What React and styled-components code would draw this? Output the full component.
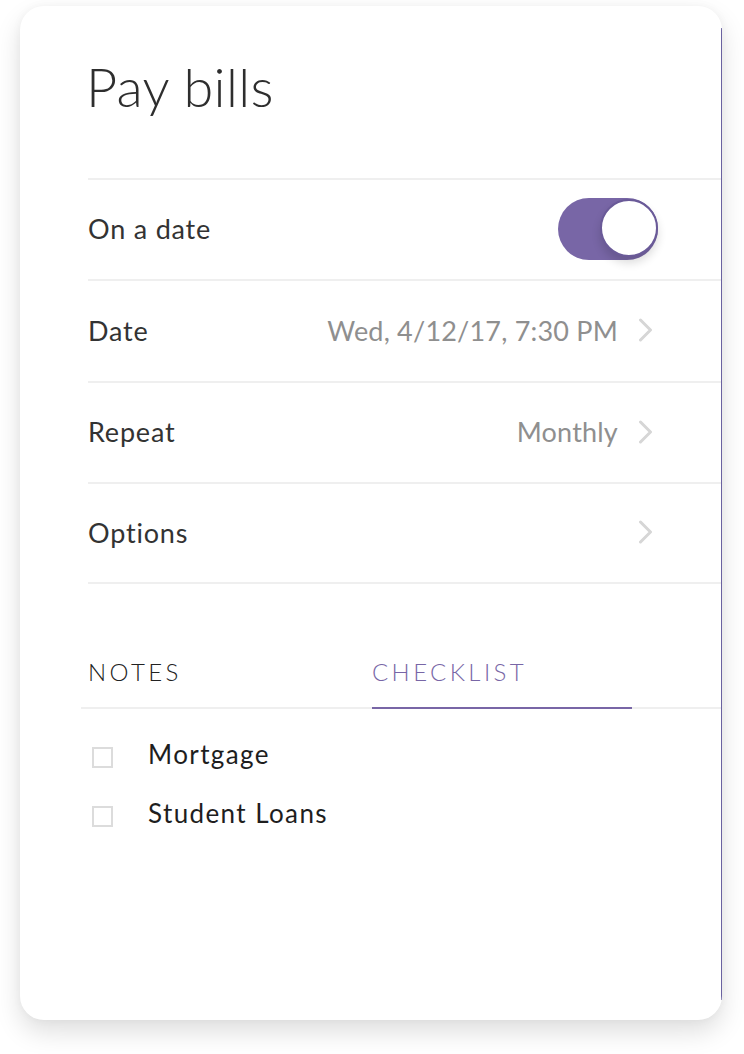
import React from "react";
import styled, { createGlobalStyle } from "styled-components";

const Global = createGlobalStyle`
  html, body { margin: 0; padding: 0; background: #ffffff; }
  body { font-family: Lato, "Open Sans", "Liberation Sans", sans-serif; -webkit-font-smoothing: antialiased; }
  * { box-sizing: border-box; }
`;

const PURPLE = "#7866a6";

const Page = styled.div`
  padding: 6px 22px 34px 20px;
`;

const Card = styled.div`
  position: relative;
  width: 702px;
  height: 1014px;
  background: #fff;
  border-radius: 24px;
  box-shadow: 0 12px 26px rgba(0, 0, 0, 0.13), 0 0 10px rgba(0, 0, 0, 0.04);
  overflow: hidden;
  padding-left: 68px;
  &::after {
    content: "";
    position: absolute;
    right: 0;
    top: 22px;
    bottom: 20px;
    width: 1px;
    background: #6a62a0;
  }
`;

const Title = styled.h1`
  margin: 0;
  height: 172px;
  padding-top: 48px;
  font-size: 54px;
  line-height: 65px;
  font-weight: 300;
  color: #2e2e2e;
  letter-spacing: 0.3px;
  margin-left: -2px;
`;

const Row = styled.div`
  display: flex;
  align-items: center;
  justify-content: space-between;
  height: ${(p) => p.$h || 101}px;
  border-top: 2px solid #efefef;
  padding-bottom: 2px;
  padding-right: ${(p) => p.$pr || 68}px;
  &:last-of-type { border-bottom: 2px solid #efefef; }
`;

const Label = styled.span`
  font-size: 27px;
  color: #333;
  font-weight: 400;
  letter-spacing: 0.8px;
`;

const ValueWrap = styled.div`
  display: flex;
  align-items: center;
  gap: 20px;
`;

const Value = styled.span`
  font-size: 27px;
  color: #8f8f8f;
  letter-spacing: 0.2px;
`;

const Toggle = styled.div`
  position: relative;
  width: 100px;
  height: 62px;
  border-radius: 31px;
  background: ${PURPLE};
`;

const Knob = styled.div`
  position: absolute;
  right: 0;
  top: 1px;
  width: 58px;
  height: 58px;
  border-radius: 50%;
  background: #fff;
  border: 2px solid #6a5a98;
  box-shadow: 0 6px 10px rgba(0, 0, 0, 0.14);
`;

const Chevron = () => (
  <svg width="16" height="24" viewBox="0 0 16 24">
    <path d="M2.5 2 L12.5 12 L2.5 22" fill="none" stroke="#d6d6d6" strokeWidth="3" strokeLinecap="round" strokeLinejoin="round" />
  </svg>
);

const Rows = styled.div``;

const Tabs = styled.div`
  display: flex;
  margin-top: 54px;
  margin-left: -7px;
  border-bottom: 2px solid #efefef;
`;

const Tab = styled.div`
  width: ${(p) => p.$w}px;
  height: 71px;
  padding-top: 19px;
  padding-left: ${(p) => p.$pl || 0}px;
  font-size: 24px;
  letter-spacing: 3.4px;
  font-weight: 300;
  color: ${(p) => (p.$active ? PURPLE : "#222")};
  border-bottom: 2px solid ${(p) => (p.$active ? PURPLE : "transparent")};
  margin-bottom: -2px;
`;

const List = styled.div`
  padding-top: 26px;
  display: flex;
  flex-direction: column;
  gap: 22px;
`;

const Item = styled.label`
  display: flex;
  align-items: center;
  gap: 35px;
  padding-left: 4px;
  height: 37px;
  font-size: 26px;
  letter-spacing: 1.4px;
  color: #1e1e1e;
`;

const Box = styled.span`
  width: 21px;
  height: 21px;
  border: 2px solid #dcdcdc;
  margin-top: 8px;
`;

export default function App() {
  return (
    <>
      <Global />
      <Page>
        <Card>
          <Title>Pay bills</Title>
          <Rows>
            <Row $pr={64}>
              <Label>On a date</Label>
              <Toggle>
                <Knob />
              </Toggle>
            </Row>
            <Row $h={102}>
              <Label>Date</Label>
              <ValueWrap>
                <Value>Wed, 4/12/17, 7:30 PM</Value>
                <Chevron />
              </ValueWrap>
            </Row>
            <Row>
              <Label>Repeat</Label>
              <ValueWrap>
                <Value>Monthly</Value>
                <Chevron />
              </ValueWrap>
            </Row>
            <Row $h={102}>
              <Label>Options</Label>
              <ValueWrap>
                <Chevron />
              </ValueWrap>
            </Row>
          </Rows>
          <Tabs>
            <Tab $w={291} $pl={7}>NOTES</Tab>
            <Tab $w={260} $active>CHECKLIST</Tab>
          </Tabs>
          <List>
            <Item>
              <Box />
              Mortgage
            </Item>
            <Item>
              <Box />
              Student Loans
            </Item>
          </List>
        </Card>
      </Page>
    </>
  );
}
